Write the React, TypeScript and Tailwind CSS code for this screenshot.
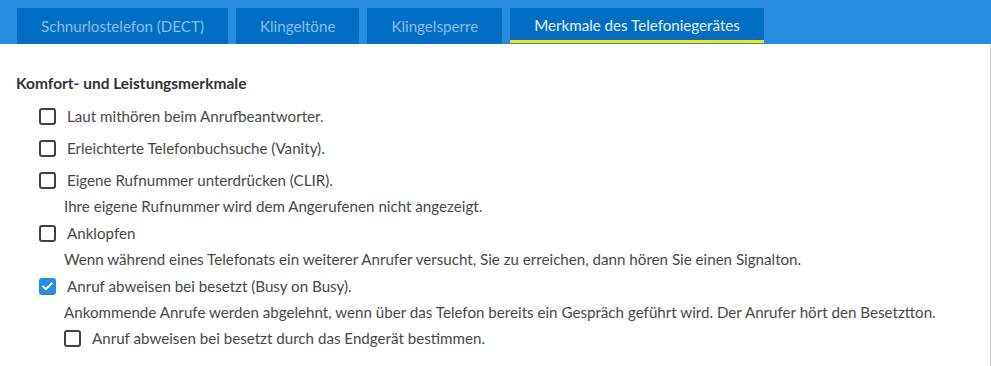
import { Check } from "lucide-react";

type Option = {
	label: string;
	checked?: boolean;
	hint?: string;
};

const tabs = ["Schnurlostelefon (DECT)", "Klingeltöne", "Klingelsperre", "Merkmale des Telefoniegerätes"];

const options: Option[] = [
	{ label: "Laut mithören beim Anrufbeantworter." },
	{ label: "Erleichterte Telefonbuchsuche (Vanity)." },
	{
		label: "Eigene Rufnummer unterdrücken (CLIR).",
		hint: "Ihre eigene Rufnummer wird dem Angerufenen nicht angezeigt.",
	},
	{
		label: "Anklopfen",
		hint: "Wenn während eines Telefonats ein weiterer Anrufer versucht, Sie zu erreichen, dann hören Sie einen Signalton.",
	},
	{
		label: "Anruf abweisen bei besetzt (Busy on Busy).",
		checked: true,
		hint: "Ankommende Anrufe werden abgelehnt, wenn über das Telefon bereits ein Gespräch geführt wird. Der Anrufer hört den Besetztton.",
	},
];

const Box = ({ checked }: { checked?: boolean }) =>
	checked ? (
		<span className="flex h-[17px] w-[17px] shrink-0 items-center justify-center rounded-[3px] bg-[#2a8ce0]">
			<Check className="h-[13px] w-[13px] text-white" strokeWidth={3.5} />
		</span>
	) : (
		<span className="h-[17px] w-[17px] shrink-0 rounded-[3px] border-2 border-[#3d4247] bg-white" />
	);

const App = () => {
	return (
		<div className="h-[366px] w-[991px] overflow-hidden bg-white font-['Lato',sans-serif] text-[15.15px] text-[#484848]">
			<div className="flex h-[44px] items-start gap-2 bg-[#288ce1] pl-[17px] pt-2">
				{tabs.map((t, i) =>
					i === 3 ? (
						<div
							key={t}
							className="flex h-[35px] items-center border-b-[3px] border-[#ffe600] bg-[#006fc3] px-6 pt-[3px] text-[#e8f0fa]"
						>
							{t}
						</div>
					) : (
						<div key={t} className="flex h-[36px] items-center bg-[#006fc3] px-6 text-[#8cbde9]">
							{t}
						</div>
					)
				)}
			</div>
			<div className="h-[322px] border-r border-[#d0d0d0] pl-4 pt-[28px]">
				<h3 className="text-[15.5px] font-bold text-[#333]">Komfort- und Leistungsmerkmale</h3>
				<div className="mt-[12px] pl-[23px]">
					{options.map((o, i) => (
						<div key={i} className={i > 0 ? (options[i - 1].hint ? "mt-[8px]" : "mt-[13px]") : ""}>
							<label className="flex h-[19px] items-center gap-[11px]">
								<Box checked={o.checked} />
								<span>{o.label}</span>
							</label>
							{o.hint && <p className="mt-[7px] pl-[25px] leading-[19px]">{o.hint}</p>}
						</div>
					))}
					<label className="ml-[25px] mt-[7px] flex h-[19px] items-center gap-[11px]">
						<Box />
						<span>Anruf abweisen bei besetzt durch das Endgerät bestimmen.</span>
					</label>
				</div>
			</div>
		</div>
	);
};

export default App;
